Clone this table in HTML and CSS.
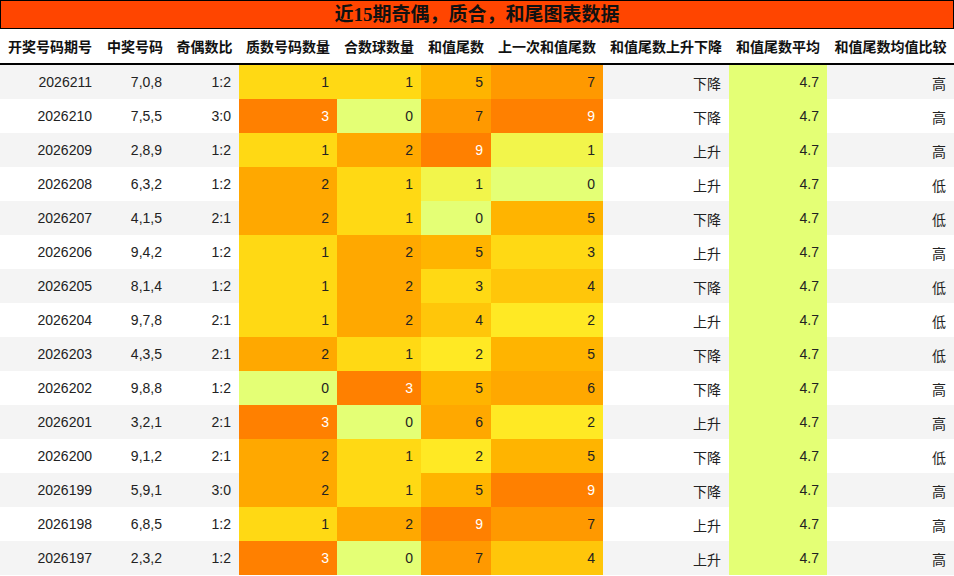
FILE: index.html
```html
<!DOCTYPE html>
<html lang="zh-CN">
<head>
<meta charset="utf-8">
<title>近15期奇偶，质合，和尾图表数据</title>
<link rel="stylesheet" href="styles.css">
</head>
<body>
<div class="title">近15期奇偶，质合，和尾图表数据</div>
<table class="data">
<colgroup>
<col class="w100"><col class="w70"><col class="w69"><col class="w98"><col class="w84"><col class="w70"><col class="w112"><col class="w126"><col class="w98"><col class="w127">
</colgroup>
<thead>
<tr><th>开奖号码期号</th><th>中奖号码</th><th>奇偶数比</th><th>质数号码数量</th><th>合数球数量</th><th>和值尾数</th><th>上一次和值尾数</th><th>和值尾数上升下降</th><th>和值尾数平均</th><th>和值尾数均值比较</th></tr>
</thead>
<tbody>
<tr><td>2026211</td><td>7,0,8</td><td>1:2</td><td class="q1">1</td><td class="q1">1</td><td class="t5">5</td><td class="t7">7</td><td class="cj">下降</td><td class="avg">4.7</td><td class="cj">高</td></tr>
<tr><td>2026210</td><td>7,5,5</td><td>3:0</td><td class="q3">3</td><td class="q0">0</td><td class="t7">7</td><td class="t9">9</td><td class="cj">下降</td><td class="avg">4.7</td><td class="cj">高</td></tr>
<tr><td>2026209</td><td>2,8,9</td><td>1:2</td><td class="q1">1</td><td class="q2">2</td><td class="t9">9</td><td class="t1">1</td><td class="cj">上升</td><td class="avg">4.7</td><td class="cj">高</td></tr>
<tr><td>2026208</td><td>6,3,2</td><td>1:2</td><td class="q2">2</td><td class="q1">1</td><td class="t1">1</td><td class="t0">0</td><td class="cj">上升</td><td class="avg">4.7</td><td class="cj">低</td></tr>
<tr><td>2026207</td><td>4,1,5</td><td>2:1</td><td class="q2">2</td><td class="q1">1</td><td class="t0">0</td><td class="t5">5</td><td class="cj">下降</td><td class="avg">4.7</td><td class="cj">低</td></tr>
<tr><td>2026206</td><td>9,4,2</td><td>1:2</td><td class="q1">1</td><td class="q2">2</td><td class="t5">5</td><td class="t3">3</td><td class="cj">上升</td><td class="avg">4.7</td><td class="cj">高</td></tr>
<tr><td>2026205</td><td>8,1,4</td><td>1:2</td><td class="q1">1</td><td class="q2">2</td><td class="t3">3</td><td class="t4">4</td><td class="cj">下降</td><td class="avg">4.7</td><td class="cj">低</td></tr>
<tr><td>2026204</td><td>9,7,8</td><td>2:1</td><td class="q1">1</td><td class="q2">2</td><td class="t4">4</td><td class="t2">2</td><td class="cj">上升</td><td class="avg">4.7</td><td class="cj">低</td></tr>
<tr><td>2026203</td><td>4,3,5</td><td>2:1</td><td class="q2">2</td><td class="q1">1</td><td class="t2">2</td><td class="t5">5</td><td class="cj">下降</td><td class="avg">4.7</td><td class="cj">低</td></tr>
<tr><td>2026202</td><td>9,8,8</td><td>1:2</td><td class="q0">0</td><td class="q3">3</td><td class="t5">5</td><td class="t6">6</td><td class="cj">下降</td><td class="avg">4.7</td><td class="cj">高</td></tr>
<tr><td>2026201</td><td>3,2,1</td><td>2:1</td><td class="q3">3</td><td class="q0">0</td><td class="t6">6</td><td class="t2">2</td><td class="cj">上升</td><td class="avg">4.7</td><td class="cj">高</td></tr>
<tr><td>2026200</td><td>9,1,2</td><td>2:1</td><td class="q2">2</td><td class="q1">1</td><td class="t2">2</td><td class="t5">5</td><td class="cj">下降</td><td class="avg">4.7</td><td class="cj">低</td></tr>
<tr><td>2026199</td><td>5,9,1</td><td>3:0</td><td class="q2">2</td><td class="q1">1</td><td class="t5">5</td><td class="t9">9</td><td class="cj">下降</td><td class="avg">4.7</td><td class="cj">高</td></tr>
<tr><td>2026198</td><td>6,8,5</td><td>1:2</td><td class="q1">1</td><td class="q2">2</td><td class="t9">9</td><td class="t7">7</td><td class="cj">上升</td><td class="avg">4.7</td><td class="cj">高</td></tr>
<tr><td>2026197</td><td>2,3,2</td><td>1:2</td><td class="q3">3</td><td class="q0">0</td><td class="t7">7</td><td class="t4">4</td><td class="cj">上升</td><td class="avg">4.7</td><td class="cj">高</td></tr>
</tbody>
</table>
</body>
</html>
```
FILE: styles.css
```css
html, body {
  margin: 0;
  padding: 0;
  background: #ffffff;
}

body {
  width: 954px;
  font-family: "Liberation Sans", "Noto Sans CJK SC", sans-serif;
  color: #222222;
}

.title {
  height: 27px;
  border: 1px solid #000000;
  background: #ff4500;
  color: #111111;
  font-family: "Liberation Serif", "Noto Sans CJK SC", serif;
  font-weight: bold;
  font-size: 19px;
  line-height: 28px;
  text-align: center;
}

.data {
  width: 954px;
  table-layout: fixed;
  border-collapse: separate;
  border-spacing: 0;
  font-size: 14px;
}

.w100 { width: 100px; }
.w70 { width: 70px; }
.w69 { width: 69px; }
.w98 { width: 98px; }
.w84 { width: 84px; }
.w112 { width: 112px; }
.w126 { width: 126px; }
.w127 { width: 127px; }

.data th {
  height: 36px;
  padding: 0;
  border-bottom: 2px solid #000000;
  font-family: "Noto Sans CJK SC", sans-serif;
  font-weight: bold;
  font-size: 14px;
  color: #111111;
  text-align: center;
  white-space: nowrap;
  box-sizing: border-box;
}

.data td {
  height: 34px;
  padding: 0 8px 0 0;
  text-align: right;
  white-space: nowrap;
  box-sizing: border-box;
  line-height: 34px;
}

.data td.cj {
  font-family: "Noto Sans CJK SC", sans-serif;
  padding-top: 3px;
  line-height: 31px;
}

.data tbody tr:nth-child(odd) { background: #f4f4f4; }
.data tbody tr:nth-child(even) { background: #ffffff; }

.avg { background: #e4ff75; }

.q0 { background: #e4ff75; }
.q1 { background: #ffd914; }
.q2 { background: #ffa800; }
.q3 { background: #ff8000; color: #ffffff; }

.t0 { background: #e4ff75; }
.t1 { background: #f2f54b; }
.t2 { background: #ffe924; }
.t3 { background: #ffd914; }
.t4 { background: #ffc60a; }
.t5 { background: #ffb400; }
.t6 { background: #ffa800; }
.t7 { background: #ff9900; }
.t9 { background: #ff8000; color: #ffffff; }
```
